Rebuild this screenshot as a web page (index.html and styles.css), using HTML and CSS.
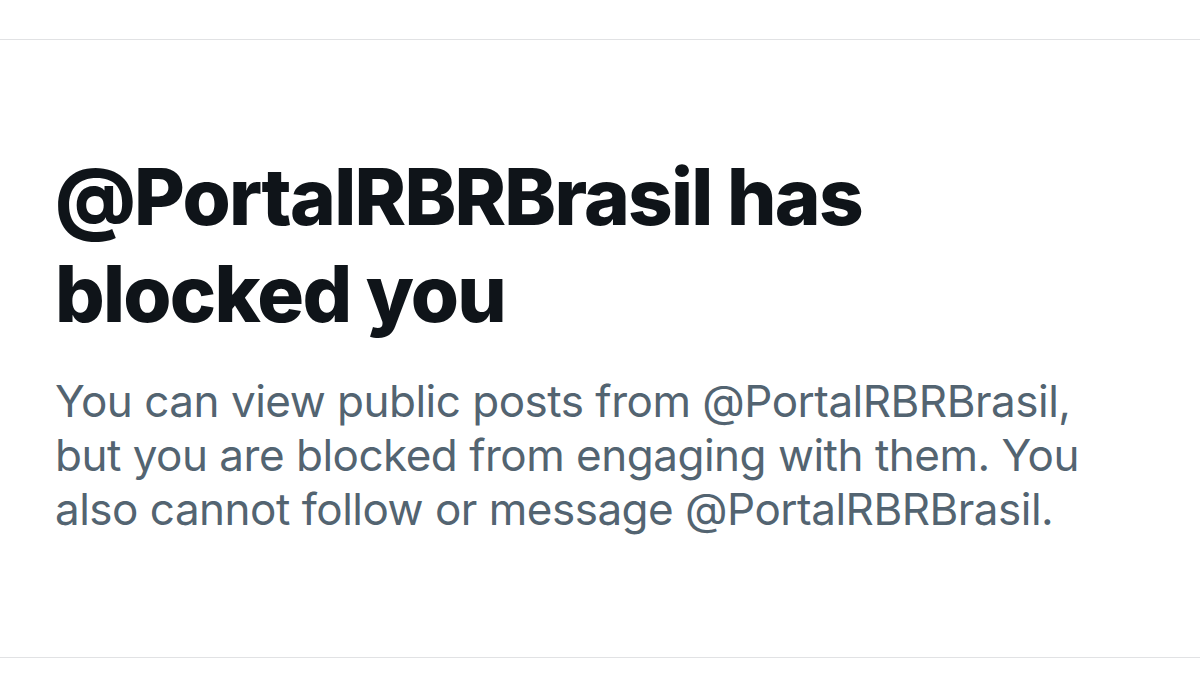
FILE: index.html
```html
<!DOCTYPE html>
<html lang="en">
<head>
  <meta charset="UTF-8">
  <meta name="viewport" content="width=device-width, initial-scale=1.0">
  <title>Blocked</title>
  <link rel="stylesheet" href="styles.css">
</head>
<body>
  <div class="top-space"></div>
  <div class="blocked">
    <h1 class="blocked-title">@PortalRBRBrasil has blocked you</h1>
    <p class="blocked-text">You can view public posts from @PortalRBRBrasil, but you are blocked from engaging with them. You also cannot follow or message @PortalRBRBrasil.</p>
  </div>
</body>
</html>
```
FILE: styles.css
```css
/* blocked profile notice */
body {
  font-family: Inter, "Noto Sans", sans-serif;
  margin: 0;
  background-color: #fff;
}
.top-space {
  height: 39px;
}
.blocked {
  border-top: 1px solid #e1e2e4;
  border-bottom: 1px solid #e1e2e4;
  padding: 108px 60px 121px 55px;
}
.blocked-title {
  margin: 0;
  font-size: 78px;
  line-height: 97px;
  font-weight: 800;
  letter-spacing: -1.75px;
  color: #0f1419;
  max-width: 900px;
}
.blocked-text {
  margin: 32px 0 0;
  font-size: 44px;
  line-height: 54px;
  letter-spacing: -0.5px;
  color: #536471;
  max-width: 1060px;
}
```
